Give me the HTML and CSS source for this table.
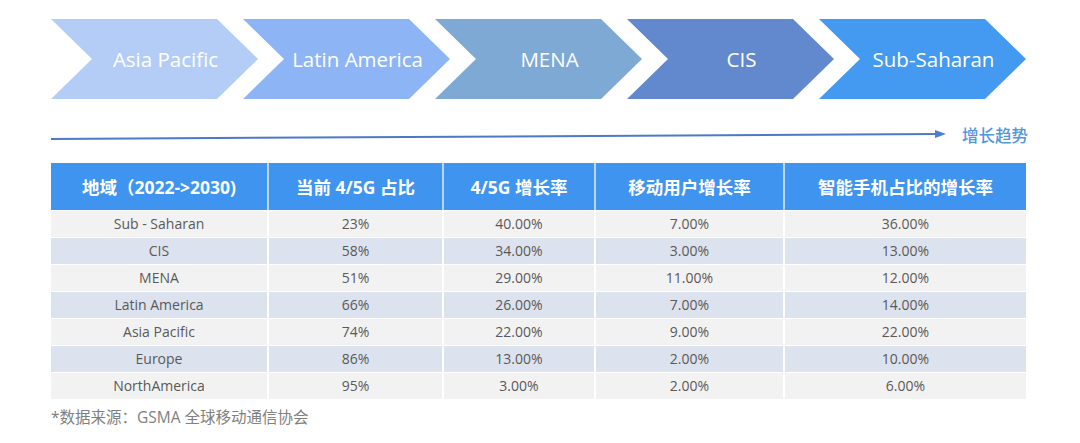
FILE: index.html
```html
<!DOCTYPE html>
<html lang="zh">
<head>
<meta charset="utf-8">
<link rel="stylesheet" href="styles.css">
</head>
<body>
<div class="page">
  <div class="chevrons">
    <div class="chev c1"><span>Asia Pacific</span></div>
    <div class="chev c2"><span>Latin America</span></div>
    <div class="chev c3"><span>MENA</span></div>
    <div class="chev c4"><span>CIS</span></div>
    <div class="chev c5"><span>Sub-Saharan</span></div>
  </div>
  <div class="trend">
    <svg class="trend-line" width="895" height="16" viewBox="0 0 895 16">
      <line x1="0" y1="12" x2="886" y2="7" stroke="#4f78c8" stroke-width="2"/>
      <polygon points="884,3 895,7 884,11" fill="#4a7fd6"/>
    </svg>
    <span class="trend-label">增长趋势</span>
  </div>
  <table class="data">
    <colgroup>
      <col style="width:216px"><col style="width:175px"><col style="width:152px"><col style="width:189px"><col style="width:243px">
    </colgroup>
    <thead>
      <tr><th>地域（2022-&gt;2030)</th><th>当前 4/5G 占比</th><th>4/5G 增长率</th><th>移动用户增长率</th><th>智能手机占比的增长率</th></tr>
    </thead>
    <tbody>
      <tr><td>Sub - Saharan</td><td>23%</td><td>40.00%</td><td>7.00%</td><td>36.00%</td></tr>
      <tr><td>CIS</td><td>58%</td><td>34.00%</td><td>3.00%</td><td>13.00%</td></tr>
      <tr><td>MENA</td><td>51%</td><td>29.00%</td><td>11.00%</td><td>12.00%</td></tr>
      <tr><td>Latin America</td><td>66%</td><td>26.00%</td><td>7.00%</td><td>14.00%</td></tr>
      <tr><td>Asia Pacific</td><td>74%</td><td>22.00%</td><td>9.00%</td><td>22.00%</td></tr>
      <tr><td>Europe</td><td>86%</td><td>13.00%</td><td>2.00%</td><td>10.00%</td></tr>
      <tr><td>NorthAmerica</td><td>95%</td><td>3.00%</td><td>2.00%</td><td>6.00%</td></tr>
    </tbody>
  </table>
  <p class="note">*数据来源：GSMA 全球移动通信协会</p>
</div>
</body>
</html>
```
FILE: styles.css
```css
html, body {
  margin: 0;
  padding: 0;
  background: #ffffff;
}
body {
  font-family: "Open Sans", "Noto Sans CJK SC", sans-serif;
}
.page {
  padding: 19px 0 0 51px;
}
.chevrons {
  display: flex;
  height: 80px;
}
.chev {
  flex: 0 0 207px;
  height: 80px;
  margin-left: -15px;
  clip-path: polygon(0 0, 166px 0, 207px 50%, 166px 100%, 0 100%, 41px 50%);
  display: flex;
  align-items: center;
  justify-content: center;
  padding-left: 22px;
  box-sizing: border-box;
  color: #ffffff;
  font-size: 20.5px;
}
.chev.c1 { margin-left: 0; background: #b3cdf6; }
.chev.c2 { background: #8db5f5; }
.chev.c3 { background: #7ea9d4; }
.chev.c4 { background: #6289cd; }
.chev.c5 { background: #4499f0; }

.trend {
  display: flex;
  align-items: center;
  gap: 16px;
  margin-top: 28px;
  height: 16px;
}
.trend-line { display: block; }
.trend-label {
  font-family: "Noto Sans CJK SC", sans-serif;
  font-size: 16.5px;
  font-weight: 500;
  color: #5496dc;
  line-height: 16px;
}

.data {
  margin-top: 20px;
  width: 975px;
  table-layout: fixed;
  border-collapse: separate;
  border-spacing: 0;
}
.data th {
  height: 47px;
  padding: 0;
  background: #3e94ef;
  color: #ffffff;
  font-family: "Open Sans", "Noto Sans CJK SC", sans-serif;
  font-size: 17.5px;
  font-weight: 700;
  text-align: center;
  border-left: 2px solid #b9d8f8;
  box-sizing: border-box;
}
.data th:first-child,
.data td:first-child { border-left: none; }
.data tbody tr { height: 27px; }
.data td {
  padding: 0;
  font-size: 14px;
  color: #595959;
  text-align: center;
  border-left: 2px solid #ffffff;
  border-top: 1px solid #ffffff;
  line-height: 18px;
}
.data tbody tr:nth-child(odd) td { background: #f2f2f2; }
.data tbody tr:nth-child(even) td { background: #dde3ee; }

.note {
  margin: 8px 0 0 0;
  font-size: 15.5px;
  line-height: 20px;
  color: #808080;
  font-family: "Open Sans", "Noto Sans CJK SC", sans-serif;
}
```
